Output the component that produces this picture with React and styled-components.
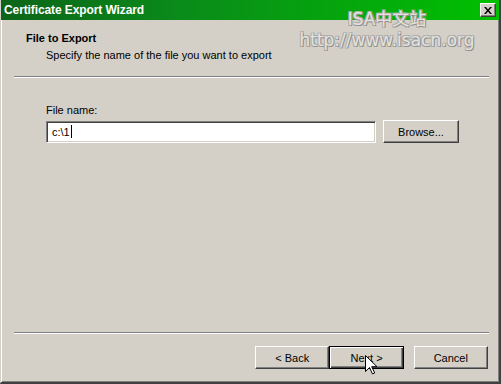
import React from 'react';
import styled, { createGlobalStyle, css } from 'styled-components';

const GlobalStyle = createGlobalStyle`
  html, body {
    margin: 0;
    padding: 0;
    background: #d4d0c8;
  }
  * {
    box-sizing: border-box;
  }
`;

// ---------------- MAIN COMPONENT ----------------
export default function App() {
  return (
    <>
      <GlobalStyle />
      <Window>
        <TitleBar>
          <Title>Certificate Export Wizard</Title>
          <CloseBtn>
            <svg width="8" height="7" viewBox="0 0 8 7">
              <path d="M0 0h2l2 2.5L6 0h2L5 3.5 8 7H6L4 4.5 2 7H0l3-3.5z" fill="#000" />
            </svg>
          </CloseBtn>
        </TitleBar>

        <Watermark>
          <MarkLine $size={17}>ISA中文站</MarkLine>
          <MarkLine $size={17}>http://www.isacn.org</MarkLine>
        </Watermark>

        <Header>
          <HeaderTitle>File to Export</HeaderTitle>
          <HeaderSub>Specify the name of the file you want to export</HeaderSub>
        </Header>
        <Separator />

        <Body>
          <Label>File name:</Label>
          <FieldRow>
            <TextBox>
              c:\1<Caret />
            </TextBox>
            <Button $width={76}>Browse...</Button>
          </FieldRow>
        </Body>

        <Separator />
        <Footer>
          <Button>&lt; Back</Button>
          <Button $focused>
            Next &gt;
            <Pointer width="12" height="20" viewBox="0 0 12 20">
              <path d="M0.5 0.5v16l4-4 3 6.5 2.2-1-3-6.3h5.3z" fill="#fff" stroke="#000" strokeWidth="1" />
            </Pointer>
          </Button>
          <Spacer />
          <Button>Cancel</Button>
        </Footer>
      </Window>
    </>
  );
}

// ---------------- STYLES ----------------
const font = `"Liberation Sans", "Noto Sans CJK SC", Arial, sans-serif`;

const Window = styled.div`
  position: relative;
  width: 501px;
  height: 384px;
  background: #d4d0c8;
  display: flex;
  flex-direction: column;
  font-family: ${font};
  font-size: 11px;
  color: #000;
  border-left: 1px solid #d4d0c8;
  border-right: 2px solid #404040;
  border-bottom: 2px solid #404040;
  box-shadow: inset 1px 0 0 #fff, inset -1px -1px 0 #808080;
  overflow: hidden;
`;

const TitleBar = styled.div`
  height: 20px;
  margin-left: -1px;
  display: flex;
  align-items: center;
  justify-content: space-between;
  padding: 0 3px 0 4px;
  background: linear-gradient(90deg, #0c6418 0%, #0a8a1a 35%, #00c000 100%);
`;

const Title = styled.span`
  color: #fff;
  font-weight: bold;
  font-size: 12px;
  letter-spacing: -0.1px;
`;

const CloseBtn = styled.div`
  width: 16px;
  height: 14px;
  display: flex;
  align-items: center;
  justify-content: center;
  background: #d4d0c8;
  border: 1px solid;
  border-color: #fff #404040 #404040 #fff;
  box-shadow: inset -1px -1px 0 #808080;
`;

const Watermark = styled.div`
  position: absolute;
  top: 9px;
  left: 296px;
  width: 180px;
  display: flex;
  flex-direction: column;
  align-items: center;
  pointer-events: none;
`;

const MarkLine = styled.span`
  font-family: "DejaVu Sans", "Noto Sans CJK SC", sans-serif;
  font-size: ${p => p.$size}px;
  line-height: 21px;
  color: #e4e2de;
  text-shadow: 1px 1px 0 #909090, -1px -1px 0 #b4b2ae, 1px -1px 0 #aaa8a4, -1px 1px 0 #aaa8a4;
`;

const Header = styled.div`
  height: 72px;
  margin-top: -16px;
  padding: 27px 0 0 25px;
`;

const HeaderTitle = styled.div`
  font-weight: bold;
  line-height: 14px;
`;

const HeaderSub = styled.div`
  padding-left: 20px;
  margin-top: 3px;
  line-height: 14px;
`;

const Separator = styled.div`
  margin: 0 10px 0 13px;
  height: 2px;
  border-top: 1px solid #808080;
  border-bottom: 1px solid #fff;
  flex-shrink: 0;
`;

const Body = styled.div`
  flex: 1;
  padding: 25px 0 0 45px;
`;

const Label = styled.div`
  line-height: 14px;
  margin-bottom: 3px;
`;

const FieldRow = styled.div`
  display: flex;
  align-items: center;
  gap: 7px;
`;

const TextBox = styled.div`
  width: 330px;
  height: 22px;
  background: #fff;
  border: 1px solid;
  border-color: #808080 #fff #fff #808080;
  box-shadow: inset 1px 1px 0 #404040, inset -1px -1px 0 #d4d0c8;
  display: flex;
  align-items: center;
  padding-left: 5px;
  font-size: 11px;
`;

const Caret = styled.span`
  display: inline-block;
  width: 1px;
  height: 13px;
  margin-left: 1px;
  background: #000;
`;

const Footer = styled.div`
  height: 48px;
  display: flex;
  align-items: flex-start;
  padding: 12px 11px 0 254px;
`;

const Spacer = styled.div`
  width: 10px;
`;

const Button = styled.div`
  position: relative;
  width: ${p => p.$width || 75}px;
  height: 23px;
  display: flex;
  align-items: center;
  justify-content: center;
  background: #d4d0c8;
  border: 1px solid;
  border-color: #fff #404040 #404040 #fff;
  box-shadow: inset -1px -1px 0 #808080;
  font-size: 11px;
  ${p => p.$focused && css`
    border-color: #000;
    box-shadow: inset 1px 1px 0 #fff, inset -1px -1px 0 #404040, inset -2px -2px 0 #808080;
  `}
`;

const Pointer = styled.svg`
  position: absolute;
  left: 35px;
  top: 8px;
`;
